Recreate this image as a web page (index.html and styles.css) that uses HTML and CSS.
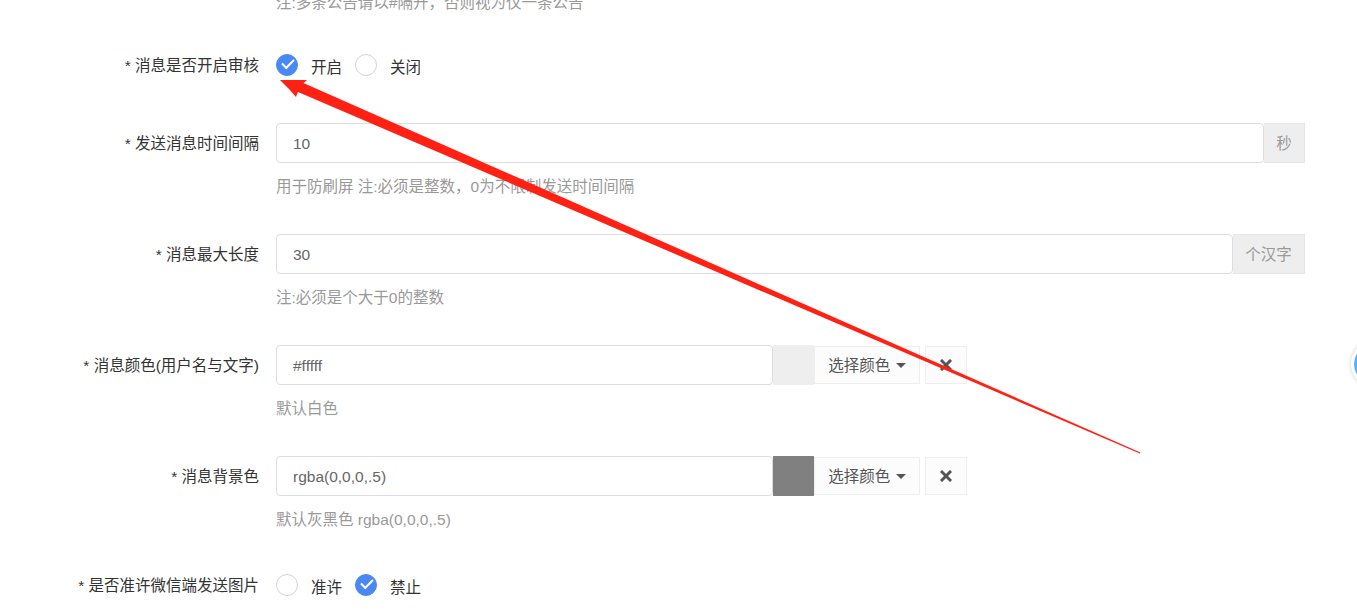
FILE: index.html
```html
<!DOCTYPE html>
<html lang="zh-CN">
<head>
    <meta charset="UTF-8">
    <meta name="viewport" content="width=device-width, initial-scale=1.0">
    <title>消息设置</title>
    <link rel="stylesheet" href="styles.css">
</head>
<body>
    <div class="page">
        <form class="form">
            <div class="form-item first">
                <div class="form-label"></div>
                <div class="form-block">
                    <div class="hint top-hint">注:多条公告请以#隔开，否则视为仅一条公告</div>
                </div>
            </div>

            <div class="form-item">
                <div class="form-label">* 消息是否开启审核</div>
                <div class="form-block">
                    <div class="radio-group">
                        <span class="radio checked"></span><span class="radio-text">开启</span>
                        <span class="radio"></span><span class="radio-text">关闭</span>
                    </div>
                </div>
            </div>

            <div class="form-item">
                <div class="form-label">* 发送消息时间间隔</div>
                <div class="form-block">
                    <div class="input-group">
                        <div class="input">10</div>
                        <div class="addon addon-sec">秒</div>
                    </div>
                    <div class="hint">用于防刷屏 注:必须是整数，0为不限制发送时间间隔</div>
                </div>
            </div>

            <div class="form-item">
                <div class="form-label">* 消息最大长度</div>
                <div class="form-block">
                    <div class="input-group">
                        <div class="input">30</div>
                        <div class="addon addon-word">个汉字</div>
                    </div>
                    <div class="hint">注:必须是个大于0的整数</div>
                </div>
            </div>

            <div class="form-item">
                <div class="form-label">* 消息颜色(用户名与文字)</div>
                <div class="form-block">
                    <div class="color-group">
                        <div class="input color-input">#fffff</div>
                        <div class="swatch swatch-light"></div>
                        <div class="pick-btn">选择颜色 <span class="caret"></span></div>
                        <div class="clear-btn">
                            <svg width="12" height="12" viewBox="0 0 12 12"><path d="M2 2 L10 10 M10 2 L2 10" stroke="#555" stroke-width="3" stroke-linecap="square"/></svg>
                        </div>
                    </div>
                    <div class="hint">默认白色</div>
                </div>
            </div>

            <div class="form-item">
                <div class="form-label">* 消息背景色</div>
                <div class="form-block">
                    <div class="color-group">
                        <div class="input color-input">rgba(0,0,0,.5)</div>
                        <div class="swatch swatch-dark"></div>
                        <div class="pick-btn">选择颜色 <span class="caret"></span></div>
                        <div class="clear-btn">
                            <svg width="12" height="12" viewBox="0 0 12 12"><path d="M2 2 L10 10 M10 2 L2 10" stroke="#555" stroke-width="3" stroke-linecap="square"/></svg>
                        </div>
                    </div>
                    <div class="hint">默认灰黑色 rgba(0,0,0,.5)</div>
                </div>
            </div>

            <div class="form-item last">
                <div class="form-label">* 是否准许微信端发送图片</div>
                <div class="form-block">
                    <div class="radio-group">
                        <span class="radio"></span><span class="radio-text">准许</span>
                        <span class="radio checked"></span><span class="radio-text">禁止</span>
                    </div>
                </div>
            </div>
        </form>

        <div class="float-ball"></div>

        <svg class="annotation" width="1357" height="610" viewBox="0 0 1357 610">
            <polygon fill="#ff2214" points="280,80 307,80 300,86 296,97 289,89"/>
            <polygon fill="#ff2214" points="294.5,90.5 300,81.5 1140.4,452.6 1139.8,453.6"/>
        </svg>
    </div>
</body>
</html>
```

FILE: styles.css
```css
body {
    margin: 0;
    background-color: #fff;
    font-family: "Liberation Sans", "Noto Sans CJK SC", sans-serif;
    font-size: 15.5px;
    color: #333;
}
.page {
    position: relative;
    width: 1357px;
    height: 610px;
    overflow: hidden;
}
.form {
    margin-top: -7px;
}
.form-item {
    display: flex;
    margin-bottom: 37px;
}
.form-item.first {
    margin-bottom: 32px;
}
.form-item.last {
    margin-top: -2px;
}
.form-label {
    width: 259px;
    flex-shrink: 0;
    text-align: right;
    line-height: 40px;
    padding: 1px 17px 0 0;
    color: #333;
    white-space: nowrap;
}
.form-item.first .form-label {
    line-height: 20px;
}
.form-block {
    width: 1029px;
}
.hint {
    margin-top: 14px;
    line-height: 20px;
    color: #999;
}
.top-hint {
    margin-top: 0;
}
.radio-group {
    display: flex;
    align-items: center;
    height: 40px;
}
.radio {
    width: 22px;
    height: 22px;
    border-radius: 50%;
    border: 1px solid #d6d3cf;
    box-sizing: border-box;
    background-color: #fff;
    position: relative;
}
.radio.checked {
    border-color: #4a89f3;
    background-color: #4a89f3;
}
.radio.checked::after {
    content: "";
    position: absolute;
    left: 5px;
    top: 4px;
    width: 10px;
    height: 5px;
    border-left: 2.5px solid #fff;
    border-bottom: 2.5px solid #fff;
    transform: rotate(-45deg);
}
.radio-text {
    margin-left: 13px;
    margin-right: 13px;
    padding-top: 2px;
    color: #333;
}
.input-group {
    display: flex;
    height: 40px;
}
.input {
    flex: 1;
    height: 40px;
    box-sizing: border-box;
    border: 1px solid #dcdde3;
    border-radius: 4px;
    padding-left: 16px;
    line-height: 39px;
    color: #666;
}
.addon {
    flex-shrink: 0;
    box-sizing: border-box;
    background-color: #eee;
    border: 1px solid #e6e6e6;
    border-left: none;
    color: #999;
    text-align: center;
    line-height: 39px;
}
.addon-sec {
    width: 41px;
}
.addon-word {
    width: 72px;
}
.color-group {
    display: flex;
    align-items: center;
    height: 40px;
}
.color-input {
    flex: none;
    width: 497px;
}
.swatch {
    width: 41px;
    height: 40px;
}
.swatch-light {
    background-color: #eee;
}
.swatch-dark {
    background-color: #808080;
}
.pick-btn {
    width: 106px;
    height: 38px;
    box-sizing: border-box;
    border: 1px solid #eee;
    background-color: #fcfcfc;
    color: #555;
    line-height: 38px;
    text-align: center;
}
.caret {
    display: inline-block;
    width: 0;
    height: 0;
    border-left: 5px solid transparent;
    border-right: 5px solid transparent;
    border-top: 5px solid #555;
    vertical-align: middle;
    margin-left: 1px;
    margin-top: -2px;
}
.clear-btn {
    width: 42px;
    height: 38px;
    box-sizing: border-box;
    margin-left: 5px;
    border: 1px solid #eee;
    background-color: #fcfcfc;
    display: flex;
    align-items: center;
    justify-content: center;
}
.float-ball {
    position: absolute;
    left: 1351px;
    top: 341px;
    width: 40px;
    height: 40px;
    border-radius: 50%;
    background-color: #5aaeff;
    border: 3px solid #fff;
    box-shadow: 0 0 4px rgba(0, 0, 0, 0.2);
}
.annotation {
    position: absolute;
    left: 0;
    top: 0;
    pointer-events: none;
}
```
